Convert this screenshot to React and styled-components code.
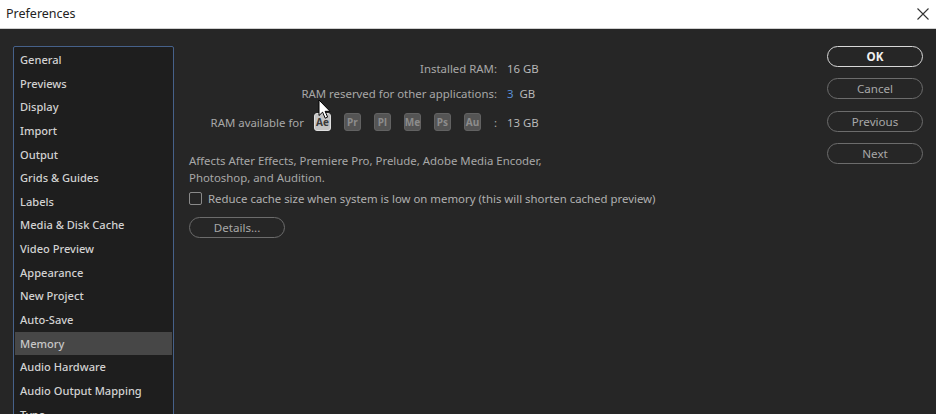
import styled, { createGlobalStyle } from 'styled-components';

const GlobalStyle = createGlobalStyle`
    html, body {
        margin: 0;
        padding: 0;
        background: #262626;
        overflow: hidden;
    }
    * { box-sizing: border-box; }
`;

const sections = [
    'General', 'Previews', 'Display', 'Import', 'Output', 'Grids & Guides', 'Labels',
    'Media & Disk Cache', 'Video Preview', 'Appearance', 'New Project', 'Auto-Save',
    'Memory', 'Audio Hardware', 'Audio Output Mapping', 'Type', 'Scripting & Expressions',
];

const apps = ['Ae', 'Pr', 'Pl', 'Me', 'Ps', 'Au'];

const App = () => {
    return (
        <Window>
            <GlobalStyle />
            <TitleBar>
                <Title>Preferences</Title>
                <CloseButton>
                    <svg width="12" height="12" viewBox="0 0 12 12">
                        <path d="M0.5 0.5 L11.5 11.5 M11.5 0.5 L0.5 11.5" stroke="#333" strokeWidth="1.1" fill="none" />
                    </svg>
                </CloseButton>
            </TitleBar>
            <Body>
                <SideList>
                    {sections.map(s => (
                        <SideItem key={s} $active={s === 'Memory'}>{s}</SideItem>
                    ))}
                </SideList>
                <Content>
                    <RamGrid>
                        <Label>Installed RAM:</Label>
                        <Value>16 GB</Value>
                        <Label>RAM reserved for other applications:</Label>
                        <Value><Blue>3</Blue> GB</Value>
                        <Label $tall>
                            RAM available for
                            <Badges>
                                {apps.map(a => (
                                    <Badge key={a} $on={a === 'Ae'}>{a}</Badge>
                                ))}
                            </Badges>
                            <Colon>:</Colon>
                        </Label>
                        <Value $tall>13 GB</Value>
                    </RamGrid>
                    <Note>
                        Affects After Effects, Premiere Pro, Prelude, Adobe Media Encoder,<br />
                        Photoshop, and Audition.
                    </Note>
                    <CheckRow>
                        <Box />
                        <span>Reduce cache size when system is low on memory (this will shorten cached preview)</span>
                    </CheckRow>
                    <PillButton $w={96}>Details...</PillButton>
                    <Cursor width="13" height="21" viewBox="0 0 13 21">
                        <path d="M1 1 L1 16.5 L4.6 13.2 L7.2 19.2 L9.6 18.1 L7.1 12.3 L12 12.3 Z" fill="#fff" stroke="#000" strokeWidth="1" strokeLinejoin="round" />
                    </Cursor>
                </Content>
                <ButtonColumn>
                    <PillButton $w={96} $primary>OK</PillButton>
                    <PillButton $w={96}>Cancel</PillButton>
                    <PillButton $w={96}>Previous</PillButton>
                    <PillButton $w={96}>Next</PillButton>
                </ButtonColumn>
            </Body>
        </Window>
    );
};

const Window = styled.div`
    width: 936px;
    height: 414px;
    display: flex;
    flex-direction: column;
    font-family: "Noto Sans", "Open Sans", sans-serif;
    overflow: hidden;
`;
const TitleBar = styled.div`
    height: 29px;
    flex: none;
    background: #fff;
    display: flex;
    align-items: center;
    justify-content: space-between;
    padding: 0 7px 2px 6px;
    border-bottom: 1px solid #d0d0d0;
`;
const Title = styled.div`
    font-size: 12.5px;
    color: #222;
`;
const CloseButton = styled.div`
    display: flex;
    align-items: center;
    margin-top: 2px;
`;
const Body = styled.div`
    flex: 1;
    background: #262626;
    display: flex;
    align-items: flex-start;
    padding: 17px 13px 0 13px;
    min-height: 0;
`;
const SideList = styled.div`
    width: 161px;
    flex: none;
    background: #1e1e1e;
    border: 1px solid #46618a;
    border-radius: 2px;
    padding: 1px 1px;
    display: flex;
    flex-direction: column;
`;
const SideItem = styled.div`
    height: 23.65px;
    line-height: 23.65px;
    padding-left: 5px;
    font-size: 11.1px;
    font-weight: 500;
    color: ${p => (p.$active ? '#c8c8c8' : '#d2d2d2')};
    background: ${p => (p.$active ? '#474747' : 'transparent')};
    white-space: nowrap;
`;
const Content = styled.div`
    flex: 1;
    position: relative;
    padding: 12px 0 0 15px;
    display: flex;
    flex-direction: column;
    align-items: flex-start;
`;
const RamGrid = styled.div`
    display: grid;
    grid-template-columns: 308px auto;
    column-gap: 10px;
    row-gap: 5px;
    font-size: 11.4px;
    color: #b4b4b4;
`;
const Label = styled.div`
    height: ${p => (p.$tall ? '22px' : '20px')};
    margin-top: ${p => (p.$tall ? '3px' : '0')};
    display: flex;
    align-items: center;
    justify-content: flex-end;
    white-space: nowrap;
    color: #a8a8a8;
`;
const Value = styled.div`
    height: ${p => (p.$tall ? '22px' : '20px')};
    margin-top: ${p => (p.$tall ? '3px' : '0')};
    display: flex;
    align-items: center;
    gap: 4px;
    color: #b8b8b8;
`;
const Blue = styled.span`
    color: #5a8fd8;
    margin-right: 2px;
`;
const Badges = styled.div`
    display: flex;
    gap: 13px;
    margin-left: 10px;
`;
const Badge = styled.div`
    width: 17px;
    height: 18px;
    border-radius: 3px;
    display: flex;
    align-items: center;
    justify-content: center;
    font-size: 10px;
    font-weight: 700;
    background: ${p => (p.$on ? '#c4c4c4' : '#545454')};
    color: ${p => (p.$on ? '#3a3a3a' : '#8c8c8c')};
    border: 1px solid ${p => (p.$on ? '#e0e0e0' : '#626262')};
`;
const Colon = styled.span`
    margin-left: 13px;
`;
const Note = styled.div`
    margin-top: 19px;
    font-size: 11.4px;
    line-height: 17px;
    color: #a8a8a8;
`;
const CheckRow = styled.div`
    margin-top: 4px;
    display: flex;
    align-items: center;
    gap: 6px;
    font-size: 11.4px;
    color: #b0b0b0;
    height: 16px;
`;
const Box = styled.div`
    width: 13px;
    height: 13px;
    border: 1.5px solid #8a8a8a;
    border-radius: 2px;
    flex: none;
`;
const PillButton = styled.div`
    width: ${p => p.$w}px;
    height: 21px;
    flex: none;
    border-radius: 11px;
    border: 1.5px solid ${p => (p.$primary ? '#d8d8d8' : '#6c6c6c')};
    display: flex;
    align-items: center;
    justify-content: center;
    font-size: 11.6px;
    font-weight: ${p => (p.$primary ? 700 : 400)};
    color: ${p => (p.$primary ? '#f0f0f0' : '#a8a8a8')};
    margin-top: 11.3px;
`;
const ButtonColumn = styled.div`
    display: flex;
    flex-direction: column;
    margin-top: -11.3px;
`;
const Cursor = styled.svg`
    position: absolute;
    left: 144px;
    top: 53px;
`;

export default App
